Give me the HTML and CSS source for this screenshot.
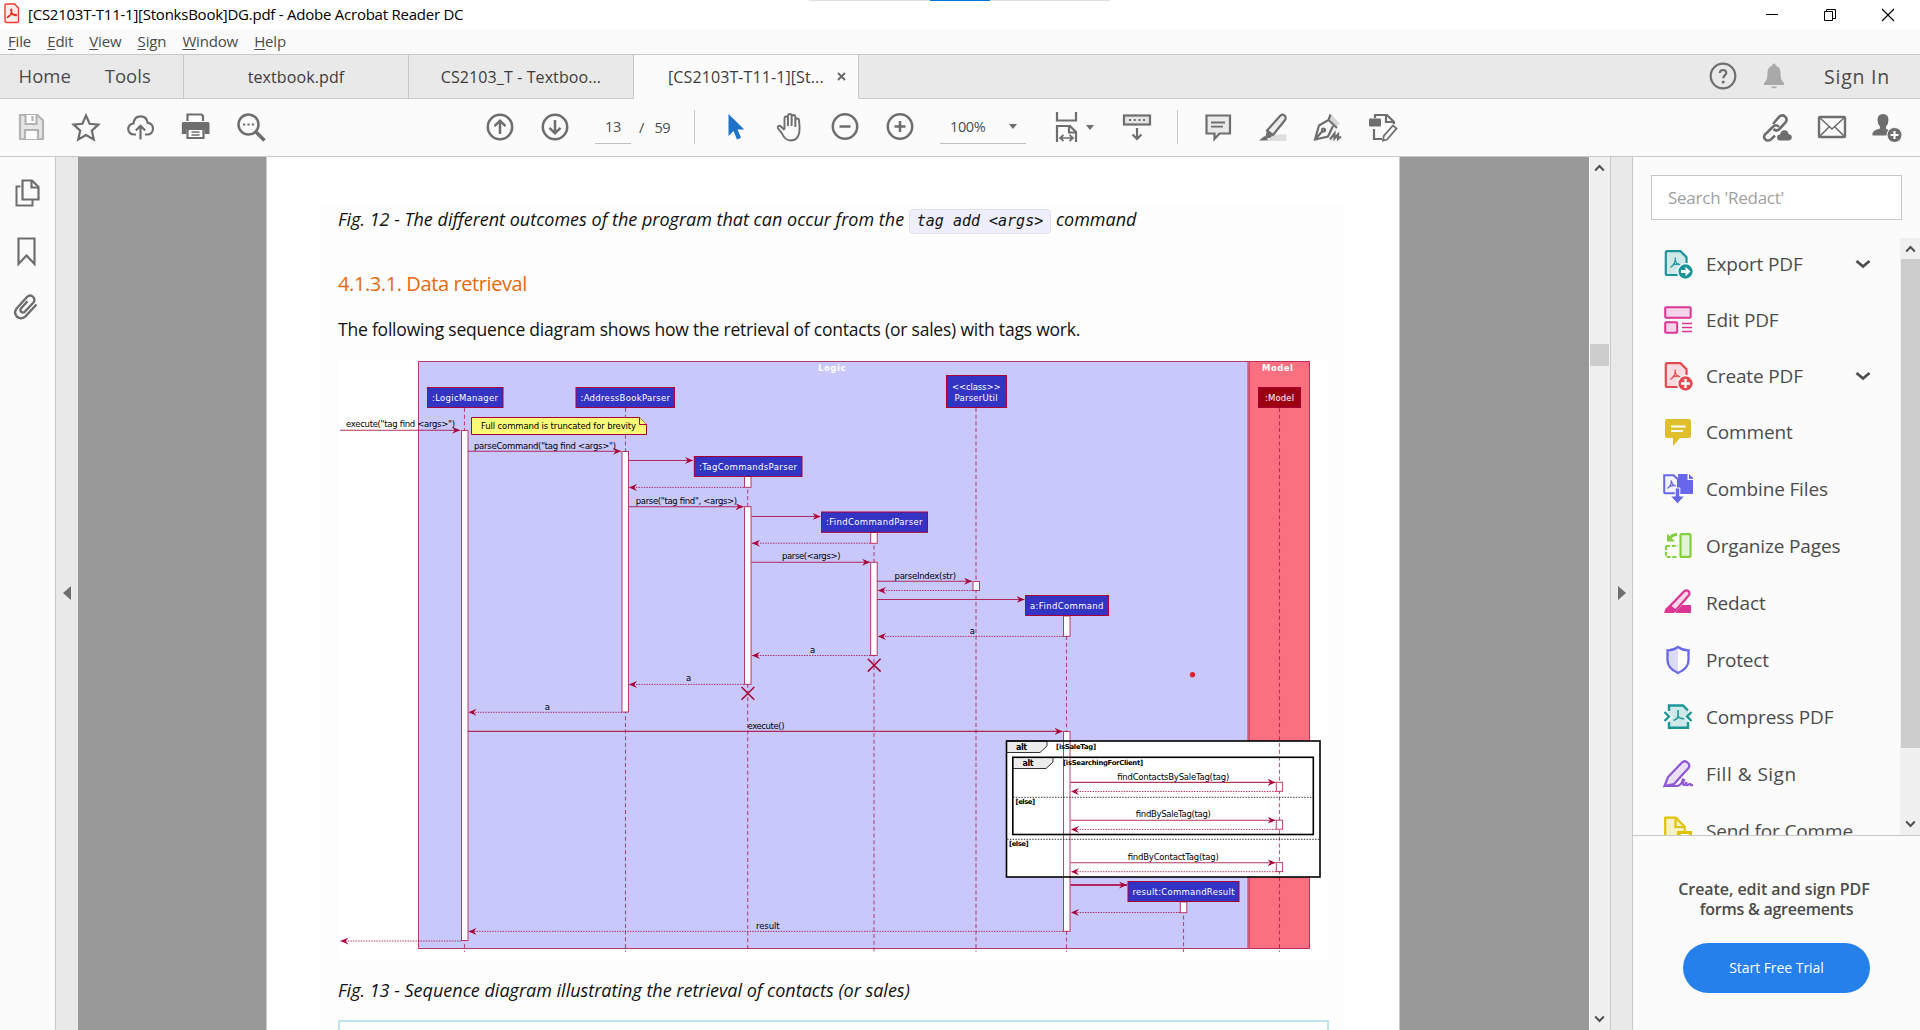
FILE: index.html
```
<!DOCTYPE html>
<html lang="en">
<head>
<meta charset="utf-8">
<title>[CS2103T-T11-1][StonksBook]DG.pdf - Adobe Acrobat Reader DC</title>
<link rel="stylesheet" href="styles.css">
</head>
<body>
<div class="app">
  <header class="titlebar">
    <svg class="app-icon" width="16" height="21" viewBox="0 0 16 21"><path d="M2 1h8.5L14.500 5v13q0 1.500-1.500 1.500H2.500Q1 19.500 1 18V2.500Q1 1 2 1z" fill="#fdeceb" stroke="#ee3b31" stroke-width="1.400"/><path d="M3.500 14.500C6 13.500 8 9.500 7.700 6.500c-.3-1-1.200 0-.5 2 .8 2.300 2.800 4 5 4 .8-.8-.5-1.300-2.500-1.200-2.600.2-5.700 1.200-6.200 3.200z" fill="none" stroke="#e3261c" stroke-width="1.300"/></svg>
    <span class="title">[CS2103T-T11-1][StonksBook]DG.pdf - Adobe Acrobat Reader DC</span>
    <div class="winctl">
      <svg width="14" height="14" viewBox="0 0 14 14"><path d="M1 6.500h12" stroke="#000"/></svg>
      <svg width="14" height="14" viewBox="0 0 14 14"><path d="M1.500 3.500h8v9h-8zM3.500 3.500v-2h9v9h-3" fill="none" stroke="#000"/></svg>
      <svg width="14" height="14" viewBox="0 0 14 14"><path d="M1 1l12 12M13 1L1 13" stroke="#000" stroke-width="1.200"/></svg>
    </div>
    <div class="share-bar"><i></i></div>
  </header>
  <nav class="menubar"><span><u>F</u>ile</span><span><u>E</u>dit</span><span><u>V</u>iew</span><span><u>S</u>ign</span><span><u>W</u>indow</span><span><u>H</u>elp</span></nav>
  <div class="tabs">
    <div class="tab-home"><span>Home</span><span>Tools</span></div>
    <div class="tab"><span>textbook.pdf</span></div>
    <div class="tab"><span>CS2103_T - Textboo...</span></div>
    <div class="tab active"><span>[CS2103T-T11-1][St...</span><svg width="9" height="9" viewBox="0 0 9 9"><path d="M1 1l7 7M8 1L1 8" stroke="#6a6a6a" stroke-width="2"/></svg></div>
    <div class="tab-right">
      <svg width="28" height="28" viewBox="0 0 28 28"><circle cx="14" cy="14" r="12.300" fill="none" stroke="#6e6e6e" stroke-width="2.200"/><path d="M10.800 11q.2-3 3.300-3t3.200 2.800c0 2.200-3 2.600-3 5.400" fill="none" stroke="#6e6e6e" stroke-width="2.200"/><circle cx="14.200" cy="20" r="1.500" fill="#6e6e6e"/></svg>
      <svg width="22" height="26" viewBox="0 0 22 26"><path d="M11 .5q1.800 0 1.800 2.200c3.500 1 4.700 4 4.700 7.300 0 5 1 8 3.500 10v2H1v-2c2.500-2 3.500-5 3.500-10 0-3.300 1.200-6.300 4.700-7.300Q9.200.5 11 .5zM8 23.500h6q-.5 2-3 2t-3-2z" fill="#a9a9a9"/></svg>
      <span class="signin">Sign In</span>
    </div>
  </div>
  <div class="toolbar">
    <svg class="ic dim" viewBox="0 0 30 30"><path d="M4 3h17.500L27 8.500V27H4z" fill="#e6e6e6" stroke="none"/><path d="M4 3h17.500L27 8.500V27H4z"/><path d="M9.500 3v9h11V3M9 27v-9h13v9" fill="#fff"/><path d="M16.500 4v5"/></svg>
    <svg class="ic" viewBox="0 0 30 30"><path d="M15 3.500l3.600 8.300 8.700.8-6.500 6 2 8.900L15 23l-7.800 4.500 2-8.900-6.500-6 8.700-.8z"/></svg>
    <svg class="ic" viewBox="0 0 30 30"><path d="M10 22.500H8a5.500 5.500 0 0 1-.5-11C8 6.500 11 4.300 14.500 4.300c4 0 6.600 2.600 7.200 6.500 3 .2 5.300 2.500 5.300 5.800 0 3.600-2.500 5.900-5.500 5.900H19M14.500 27.500V14.500M9.800 18.500l4.700-4.700 4.700 4.700"/></svg>
    <svg class="ic" viewBox="0 0 30 30"><path d="M6.500 9V2.500h14L22 4v5" fill="#fff"/><path d="M2 10h25q1.500 0 1.500 2v10h-5v-5h-18v5H.8V12Q.8 10 2 10z" fill="#6e6e6e" stroke="none"/><path d="M6.500 17v9h16v-9z" fill="#fff"/><path d="M10.500 20h8M10.500 23h8" stroke-width="1.500"/></svg>
    <svg class="ic" viewBox="0 0 30 30"><circle cx="12.500" cy="12.500" r="10" stroke-width="2.500"/><path d="M20 20l8.500 8.500" stroke-width="3.500"/><path d="M7 12.500h2.200M11.400 12.500h2.200M15.800 12.500H18"/></svg>
    <svg class="ic m-nav" viewBox="0 0 30 30"><circle cx="15" cy="15" r="12.200" stroke-width="2.500"/><path d="M15 22V9M9.500 14.200L15 8.700l5.500 5.500" stroke-width="2.500"/></svg>
    <svg class="ic" viewBox="0 0 30 30"><circle cx="15" cy="15" r="12.200" stroke-width="2.500"/><path d="M15 8v13M9.500 15.800l5.500 5.500 5.500-5.500" stroke-width="2.500"/></svg>
    <div class="field pagenum">13</div>
    <span class="pages"><span>/</span>59</span>
    <span class="sep"></span>
    <svg class="ic" viewBox="0 0 30 30"><path d="M8.500 2v22l5-5 3.500 8.500 4-1.700-3.500-8.300h6.800z" fill="#1e73c8" stroke="none"/></svg>
    <svg class="ic" viewBox="0 0 30 30"><path d="M9.500 17.500V6.500q0-2 1.700-2t1.700 2V14M13 12V4q0-2 1.800-2t1.800 2v10M16.700 12V5q0-2 1.800-2t1.800 2v10M20.400 14V8.500q0-2 1.800-2T24 8.500C24.500 14 27 28.500 15.500 28.500c-5 0-7-3.500-8.500-7L2.800 16c-.5-2 1.700-3 3.200-1.500l3.500 3.500"  stroke-width="1.900"/></svg>
    <svg class="ic" viewBox="0 0 30 30"><circle cx="15" cy="14.500" r="12.200" stroke-width="2.500"/><path d="M9.500 14.500h11" stroke-width="2.500"/></svg>
    <svg class="ic" viewBox="0 0 30 30"><circle cx="15" cy="14.500" r="12.200" stroke-width="2.500"/><path d="M9.500 14.500h11M15 9v11" stroke-width="2.500"/></svg>
    <div class="field zoom">100%<i class="caret"></i></div>
    <svg class="ic" viewBox="0 0 30 30"><path d="M5 0v8.500h19V0M5 30V14h13l6 6v10M17 14v6.500h7"/><path d="M8 26h13M11.500 23L8 26l3.500 3M17.500 23l3.500 3-3.500 3" stroke-width="1.700"/></svg>
    <i class="caret fit"></i>
    <svg class="ic m-scroll" viewBox="0 0 30 30"><rect x="2" y="3.500" width="26" height="9" fill="#e6e6e6"/><path d="M7 8h2M11.700 8h2M16.400 8h2M21 8h2M15 16v11M10.500 22.500L15 27l4.500-4.500"/></svg>
    <span class="sep sep2"></span>
    <svg class="ic" viewBox="0 0 30 30"><path d="M3.500 3.500h23.500v18H16.500l-5 5.500v-5.500h-8z" fill="#e9e9e9"/><path d="M8 10.500h14M8 14.700h12" stroke-width="1.800"/></svg>
    <svg class="ic" viewBox="0 0 30 30"><path d="M14 22.500h14.500v6.500H9z" fill="#dedede" stroke="none"/><path d="M22.500 3.500q2-2 4 0t.5 4.500L15 23l-6-4.500z" fill="#ececec"/><path d="M9 18.500l6 4.500-3 3H7zM6.500 24l3.500 3-1 1.500H1z" fill="#6e6e6e" stroke="none"/></svg>
    <svg class="ic" viewBox="0 0 30 30"><path d="M18 2l9 10-4 2-7-7z" fill="#d6d6d6" stroke="none"/><path d="M17.500 2.500L15.500 8 24 16M15.500 8L6 13.500 2 27.500l13-3L20 14M2 27.500l8-9"/><circle cx="10.500" cy="18" r="1.500"/><path d="M17 27.500l4.500-6v5l3.500-4v4.500l3-2.500"/></svg>
    <svg class="ic" viewBox="0 0 30 30"><path d="M7 6V3h12l7 7v2M18 3v7h8M6 17v10h8"/><rect x="1" y="6.500" width="12" height="8" rx="1" fill="#6e6e6e" stroke="none"/><path d="M25 13.500l3.500 3L19 27.500l-4 1 .8-4.500z" fill="#fff" stroke-width="1.800"/></svg>
    <div class="tool-right">
      <svg class="ic" viewBox="0 0 30 30"><path d="M11 12l6-7q3-3 6-.5t.500 6L17.500 17q-3 3-6 0" stroke-width="2.600"/><path d="M17 15q-3-3.500-6.300 0L3 22.500q-2 3 .3 5t5.700 0l4-4" stroke-width="2.600"/><path d="M18 28.500q-3-.2-3-3t3-3q.8-4.300 4.500-4.300t4 3.800q3.300.5 3.300 3.300t-3 3.200z" fill="#6e6e6e" stroke="none"/></svg>
      <svg class="ic" viewBox="0 0 30 30"><rect x="2" y="5" width="26" height="20" rx="1" stroke-width="2.400"/><path d="M3 6l12 11L27 6M3 24l9-9M27 24l-9-9" stroke-width="1.600"/></svg>
      <svg class="ic" viewBox="0 0 30 30"><path d="M11 2q5.500 0 5.500 6 0 4-2.500 6.500v2.500l4 1.500-2 5H0.500v-2q0-3 7.500-5v-2Q5.500 12 5.500 8q0-6 5.500-6z" fill="#6e6e6e" stroke="none"/><circle cx="22.500" cy="23" r="7.500" fill="#6e6e6e" stroke="#fbfbfb" stroke-width="1"/><path d="M22.500 19v8M18.500 23h8" stroke="#fff"/></svg>
    </div>
  </div>
  <main class="work">
    <aside class="nav-pane">
      <svg class="nav-ic" viewBox="0 0 30 30"><path d="M7.500 8.500H3.500v19h16v-6" stroke-width="2"/><path d="M9.500 2.500h9.500l6.500 6.500v12.500h-16z"/><path d="M18.500 2.500v7h7"/></svg>
      <svg class="nav-ic" viewBox="0 0 30 30"><path d="M5.500 2.500h16V28l-8-8.500-8 8.500z"/></svg>
      <svg class="nav-ic clip" viewBox="0 0 30 30"><path d="M25.500 13.500L14.500 25.300q-4.200 3.700-8.400.5-3.800-4-.5-8.300L16 6q3.300-2.800 6.200 0 2.500 3-.2 6L13.500 21q-2 1.200-3.500-.3-1.300-1.700.2-3.500l6.300-7" stroke-width="2.400"/></svg>
    </aside>
    <div class="strip left"><i class="tri-l"></i></div>
    <section class="viewer">
      <article class="page">
        <div class="sheet">
          <p class="caption fig12">Fig. 12 - The different outcomes of the program that can occur from the <code>tag add &lt;args&gt;</code> command</p>
          <h4>4.1.3.1. Data retrieval</h4>
          <p class="para">The following sequence diagram shows how the retrieval of contacts (or sales) with tags work.</p>
          <svg class="diagram" width="991" height="600" viewBox="338 359 991 600">
            <defs>
              <marker id="ar" markerUnits="userSpaceOnUse" markerWidth="9" markerHeight="8" refX="8" refY="4" orient="auto"><path d="M0 .5L8 4 0 7.500 2.800 4z" fill="#a80036"/></marker>
            </defs>
            <rect x="338" y="359" width="991" height="600" fill="#fff"/>
            <g stroke="#a80036" stroke-opacity=".75">
              <rect x="418.500" y="361.500" width="829.500" height="587" fill="#c8c8fa"/>
              <rect x="1249" y="361.500" width="60.500" height="587" fill="#fb7080"/>
            </g>
            <rect x="1006.500" y="741" width="313.500" height="136" fill="#fff"/>
            <path class="life" d="M464.500 408V952M625.500 408V952M747.700 476V952M874 532V952M976 408V952M1066.500 616V952M1183.500 902V952M1279.500 408V952"/>
            <g class="act">
              <rect x="461.500" y="430.500" width="6.500" height="510"/>
              <rect x="622" y="451.500" width="6.500" height="260.500"/>
              <rect x="744.500" y="476.500" width="6.500" height="10.800"/>
              <rect x="744.500" y="506.700" width="6.500" height="177.600"/>
              <rect x="870.700" y="532.500" width="6.500" height="10.800"/>
              <rect x="870.700" y="562.300" width="6.500" height="93.200"/>
              <rect x="973" y="581.500" width="6.500" height="9"/>
              <rect x="1063.500" y="616" width="6.500" height="20.300"/>
              <rect x="1063.500" y="731.500" width="6.500" height="199.800"/>
              <rect x="1180.300" y="902" width="6.500" height="10.700"/>
              <rect x="1276.300" y="782.300" width="6.300" height="9"/>
              <rect x="1276.300" y="820.200" width="6.300" height="9"/>
              <rect x="1276.300" y="862.600" width="6.300" height="9"/>
            </g>
            <g stroke="#a80036">
              <g fill="#3333c4">
                <rect x="427.500" y="387.500" width="75.500" height="20"/>
                <rect x="576" y="387.500" width="98.500" height="20"/>
                <rect x="946.500" y="375.500" width="60" height="32"/>
                <rect x="694.300" y="456.500" width="107.700" height="20"/>
                <rect x="821.500" y="512" width="106" height="20.300"/>
                <rect x="1025.500" y="595.500" width="83" height="20"/>
                <rect x="1128" y="881.500" width="111" height="20"/>
              </g>
              <rect x="1258.500" y="387.500" width="42" height="20" fill="#9d0012"/>
              <path d="M471.500 417.500h168l7 7v10h-175z" fill="#fbfb77"/><path d="M639.500 417.500v7h7" fill="#fbfb77"/>
            </g>
            <g class="msg">
              <path d="M340 430.300H460"/><path d="M468 451.300H621"/><path d="M629 460.500H693"/><path d="M629 506.700H743.500"/><path d="M751.500 516.500H820.500"/><path d="M751.500 562.300H870"/><path d="M877.500 581.300H972"/><path d="M877.500 599.500H1024.500"/><path d="M468 731.400H1062.500"/><path d="M1070.500 782.400H1275.500"/><path d="M1070.500 820.300H1275.500"/><path d="M1070.500 862.700H1275.500"/><path d="M1070.500 885H1127" class="bold"/>
            </g>
            <g class="msg ret">
              <path d="M744 487.400H629"/><path d="M870.500 543.200H752"/><path d="M973 590.500H878"/><path d="M1063 636.400H878"/><path d="M870.500 655.500H752"/><path d="M744 684.400H629"/><path d="M622 712.300H468.500"/><path d="M1276 791.500H1071"/><path d="M1276 829.400H1071"/><path d="M1276 871.700H1071"/><path d="M1180 912.500H1071"/><path d="M1063 931.400H468.500"/><path d="M461 941H340.500"/>
            </g>
            <path d="M741.500 687l12.800 12.800M754.300 687l-12.800 12.800M867.800 658.800l12.800 12.800M880.600 658.800l-12.800 12.800" stroke="#a80036" stroke-width="1.500"/>
            <circle cx="1192.500" cy="674.700" r="2.600" fill="#e81c24"/>
            <g fill="#ececec" stroke="#000" stroke-width=".8">
              <path d="M1006.500 741h40.500v5l-7 6.500h-33.500z"/><path d="M1012.500 757.500h40.500v4.500l-7 6.500h-33.500z"/>
            </g>
            <g fill="none" stroke="#000" stroke-width="1.600">
              <rect x="1006.500" y="741" width="313.500" height="136"/><rect x="1012.800" y="757.300" width="300.500" height="77.200"/>
            </g>
            <path d="M1013 797.300H1313M1007 839.300H1320" stroke="#222" stroke-dasharray="1.500 1.300" stroke-width=".9"/>
            <g class="dt light">
              <text x="432" y="401" textLength="66">:LogicManager</text>
              <text x="580.500" y="401" textLength="89.500">:AddressBookParser</text>
              <text x="952" y="390.300" textLength="48.500">&lt;&lt;class&gt;&gt;</text>
              <text x="954.500" y="401" textLength="43">ParserUtil</text>
              <text x="1265" y="401" textLength="29">:Model</text>
              <text x="699" y="470" textLength="98">:TagCommandsParser</text>
              <text x="826" y="525.300" textLength="96.500">:FindCommandParser</text>
              <text x="1030" y="609" textLength="73.500">a:FindCommand</text>
              <text x="1132.500" y="895" textLength="102">result:CommandResult</text>
              <text class="b" x="818" y="370.800" textLength="27.500">Logic</text>
              <text class="b" x="1262" y="370.800" textLength="31">Model</text>
            </g>
            <g class="dt">
              <text x="346" y="427.300" textLength="109">execute("tag find &lt;args&gt;")</text>
              <text x="481" y="429.300" textLength="155">Full command is truncated for brevity</text>
              <text x="474" y="448.500" textLength="142">parseCommand("tag find &lt;args&gt;")</text>
              <text x="635.700" y="503.800" textLength="101.500">parse("tag find", &lt;args&gt;)</text>
              <text x="782" y="559.300" textLength="58.500">parse(&lt;args&gt;)</text>
              <text x="894.500" y="578.500" textLength="61.500">parseIndex(str)</text>
              <text x="969.800" y="634">a</text><text x="810" y="653">a</text><text x="686" y="681.300">a</text><text x="544.700" y="709.500">a</text>
              <text x="747.500" y="728.500" textLength="37">execute()</text>
              <text x="1117" y="779.600" textLength="112">findContactsBySaleTag(tag)</text>
              <text x="1135.500" y="817.300" textLength="75">findBySaleTag(tag)</text>
              <text x="1127.500" y="859.700" textLength="91">findByContactTag(tag)</text>
              <text x="756" y="928.700" textLength="23.500">result</text>
              <text class="b alt" x="1016" y="749.700" textLength="11">alt</text>
              <text class="b alt" x="1022.500" y="765.800" textLength="11">alt</text>
              <g class="s"><text x="1056" y="749" textLength="40">[isSaleTag]</text>
              <text x="1063" y="765" textLength="80">[isSearchingForClient]</text>
              <text x="1015.500" y="803.700" textLength="19.500">[else]</text>
              <text x="1009" y="846.300" textLength="19.500">[else]</text></g>
            </g>
          </svg>
          <p class="caption fig13">Fig. 13 - Sequence diagram illustrating the retrieval of contacts (or sales)</p>
          <div class="callout"></div>
        </div>
      </article>
    </section>
    <div class="vscroll">
      <svg width="11" height="8" viewBox="0 0 11 8"><path d="M1.200 6.500L5.500 2l4.300 4.500" fill="none" stroke="#505050" stroke-width="2"/></svg>
      <i class="thumb"></i>
      <svg class="down" width="11" height="8" viewBox="0 0 11 8"><path d="M1.200 1.500L5.500 6l4.300-4.500" fill="none" stroke="#505050" stroke-width="2"/></svg>
    </div>
    <div class="strip right"><i class="tri-r"></i></div>
    <aside class="tools">
      <div class="search">Search 'Redact'</div>
      <div class="tool-area">
        <div class="tool-list">
          <div class="tool short"><svg viewBox="0 0 30 30"><path d="M4 2.200h13.500l6 6V26H4q-1.200 0-1.200-1.200V3.400q0-1.200 1.200-1.200z" fill="#cfe8e8" stroke="#1b959a" stroke-width="2.200"/><path d="M7.500 18.500C11 16.500 12.700 12 12.300 8.500M12.300 11c.5 3 3 5.500 6 5.500M9 16.500c3-1.500 6-1.800 8-1" fill="none" stroke="#1b959a" stroke-width="1.300"/><circle cx="22.500" cy="22.500" r="7.900" fill="#1b959a" stroke="#fbfbfb" stroke-width="1.500"/><path d="M18 21h4.500v-3.300l5 4.800-5 4.800V24H18z" fill="#fff"/></svg><span>Export PDF</span><svg class="chev" viewBox="0 0 16 10"><path d="M1.500 2L8 7.500 14.500 2" fill="none" stroke="#4b4b4b" stroke-width="2.800"/></svg></div>
          <div class="tool short"><svg viewBox="0 0 30 30"><g fill="#f5d3e9" stroke="#dc3494" stroke-width="2"><rect x="2.200" y="2.200" width="25.500" height="10.600" rx="1"/><rect x="2.200" y="17.300" width="12" height="10.500" rx="1"/></g><path d="M19 18.500h10M19 22.500h10M19 26.500h10" stroke="#dc3494" stroke-width="1.300"/></svg><span>Edit PDF</span></div>
          <div class="tool short"><svg viewBox="0 0 30 30"><path d="M4 2.200h13.500l6 6V26H4q-1.200 0-1.200-1.200V3.400q0-1.200 1.200-1.200z" fill="#f9dcdf" stroke="#e5484f" stroke-width="2.200"/><path d="M7.500 18.500C11 16.500 12.700 12 12.300 8.500M12.300 11c.5 3 3 5.500 6 5.500M9 16.500c3-1.500 6-1.800 8-1" fill="none" stroke="#e5484f" stroke-width="1.300"/><circle cx="22.500" cy="22.500" r="7.900" fill="#e5484f" stroke="#fbfbfb" stroke-width="1.500"/><path d="M22.500 18v9M18 22.500h9" stroke="#fff" stroke-width="2.400"/></svg><span>Create PDF</span><svg class="chev" viewBox="0 0 16 10"><path d="M1.500 2L8 7.500 14.500 2" fill="none" stroke="#4b4b4b" stroke-width="2.800"/></svg></div>
          <div class="tool short"><svg viewBox="0 0 30 30"><path d="M4 2h22q2 0 2 2v15q0 2-2 2h-9l-7 8v-8H4q-2 0-2-2V4q0-2 2-2z" fill="#dfc02c"/><path d="M8 9.500h14.500M8 14h12" stroke="#fff" stroke-width="2"/></svg><span>Comment</span></div>
          <div class="tool"><svg viewBox="0 0 30 30"><path d="M15 0h9.500v6H31v14H16z" fill="#6767ec"/><path d="M26 0l5 5h-5z" fill="#6767ec"/><path d="M1.200 1.200h9.300l4.500 4v14H2.200q-1 0-1-1z" fill="#f4f4ff" stroke="#6767ec" stroke-width="2"/><path d="M4.500 14.500C7 12.500 8.500 9 8.200 6.500 9 10 10.500 12 13 12M6 12.800q3-1.500 6-1.200" fill="none" stroke="#6767ec" stroke-width="1.200"/><path d="M12.200 14h4.600v8h4.700L14.500 30 7.500 22h4.700z" fill="#6767ec" stroke="#fbfbfb"/></svg><span>Combine Files</span></div>
          <div class="tool"><svg viewBox="0 0 30 30"><rect x="17.500" y="3.200" width="10" height="22.700" rx="1" fill="#e2f3d6" stroke="#84cf3e" stroke-width="2.200"/><path d="M3 15v11h12M3 15h12" fill="none" stroke="#84cf3e" stroke-width="2.200" stroke-dasharray="4 1.800"/><path d="M14 3.500q-4.500 0-6.500 3" fill="none" stroke="#84cf3e" stroke-width="3"/><path d="M4 2.500v8h8z" fill="#84cf3e"/></svg><span>Organize Pages</span></div>
          <div class="tool"><svg viewBox="0 0 30 30"><path d="M19 17.500h8.500v7H13z" fill="#dc3494" stroke="#dc3494"/><path d="M21.500 3q3-1.500 4.700.8 1 2-.7 4L12.500 22.500 7 18z" fill="#f7d6e9" stroke="#dc3494" stroke-width="2.200"/><path d="M6 17.500l6.500 5.500-1.500 2H1.200l1-4z" fill="#dc3494"/></svg><span>Redact</span></div>
          <div class="tool"><svg viewBox="0 0 30 30"><path d="M15 2q5 3.500 10.500 3.300v10Q25.500 23.500 15 28 4.500 23.500 4.500 15.300v-10Q10 5.500 15 2z" fill="#fff"/><path d="M15 2v26Q4.500 23.500 4.500 15.300v-10Q10 5.500 15 2z" fill="#dcdcf8"/><path d="M15 2q5 3.500 10.500 3.300v10Q25.500 23.500 15 28 4.500 23.500 4.500 15.300v-10Q10 5.500 15 2z" fill="none" stroke="#6767ec" stroke-width="2.300"/></svg><span>Protect</span></div>
          <div class="tool"><svg viewBox="0 0 30 30"><path d="M6 4h14l5 5v3l-4 3 4 4v6H6v-6l4-4-4-4z" fill="#cfe8e8"/><path d="M6 9V3.500h14l5 5M25 20v5.700H6V20M1.500 10l4.500 4.500L1.500 19M28.500 10L24 14.500l4.500 4.500" fill="none" stroke="#1b959a" stroke-width="2.400"/><path d="M15 8v6.500q0 2-4.500 4M15 14.500q3 3 6 2" fill="none" stroke="#1b959a" stroke-width="1.600"/></svg><span>Compress PDF</span></div>
          <div class="tool"><svg viewBox="0 0 30 30"><path d="M19 3.500q2.500-2.500 5.500 0t1 5.500L11 25l-9.500 2L5 18z" fill="#ece0f7" stroke="#8f56d6" stroke-width="2.200"/><path d="M1.500 27h12.500q4 0 6-6.500l1 .5q-2 5 0 5t2.500-3q-.5 4 1.500 3t2-2q0 2.500 3 2" fill="none" stroke="#8f56d6" stroke-width="2.200"/></svg><span class="wide">Fill &amp; Sign</span></div>
          <div class="tool"><svg viewBox="0 0 30 30"><path d="M2.200 1.700h10.500l9 9V28H2.200z" fill="#f8f1c6" stroke="#dfc300" stroke-width="2.200"/><path d="M12.500 2v9h9" fill="none" stroke="#dfc300" stroke-width="2.200"/><path d="M14 15h15v10H14z" fill="#dfc300"/><path d="M18 18.500h8" stroke="#fff"/></svg><span>Send for Comme</span></div>
        </div>
        <div class="list-scroll">
          <svg width="11" height="8" viewBox="0 0 11 8"><path d="M1.200 6.500L5.500 2l4.300 4.500" fill="none" stroke="#505050" stroke-width="2"/></svg>
          <i class="thumb2"></i>
          <svg class="down2" width="11" height="8" viewBox="0 0 11 8"><path d="M1.200 1.500L5.500 6l4.300-4.500" fill="none" stroke="#505050" stroke-width="2"/></svg>
        </div>
      </div>
      <div class="promo">
        <p class="lead">Create, edit and sign PDF</p>
        <p>forms &amp; agreements</p>
        <button>Start Free Trial</button>
      </div>
    </aside>
  </main>
</div>
</body>
</html>
```

FILE: styles.css
```
* { box-sizing: border-box; }
body { margin: 0; font-family: "Open Sans", "Noto Sans", sans-serif; font-size: 15px; color: #4b4b4b; }
svg { display: block; flex: none; }
p, h4 { margin: 0; }
.app { width: 1920px; height: 1030px; display: flex; flex-direction: column; overflow: hidden; background: #fbfbfb; }

.titlebar { position: relative; height: 29px; flex: none; display: flex; align-items: center; background: #fff; color: #000; padding-left: 4px; }
.app-icon { margin-top: -3px; }
.title { margin-left: 8px; padding-bottom: 2px; letter-spacing: -.24px; white-space: nowrap; }
.winctl { margin-left: auto; display: flex; gap: 44px; padding-right: 25px; }
.share-bar { position: absolute; left: 809px; top: 0; width: 301px; height: 1px; background: #e0e0e0; display: flex; justify-content: center; }
.share-bar i { width: 60px; height: 1px; background: #0078d7; }

.menubar { height: 26px; flex: none; display: flex; align-items: center; gap: 16.2px; padding: 0 0 2px 8px; letter-spacing: -.18px; background: #fafafa; border-bottom: 1px solid #c8c8c8; }
.menubar u { text-underline-offset: 2px; }

.tabs { height: 44px; flex: none; display: flex; background: #e9e9e9; }
.tabs > div { border-bottom: 1px solid #c8c8c8; display: flex; align-items: center; }
.tab-home { width: 183px; font-size: 18.5px; padding: 0 0 2px 18.5px; gap: 34px; }
.tab { width: 225px; border-left: 1px solid #c8c8c8; justify-content: center; font-size: 16px; letter-spacing: .1px; color: #3c3c3c; }
.tabs > .active { width: 226px; background: #fbfbfb; border-bottom-color: #fbfbfb; border-right: 1px solid #c8c8c8; justify-content: flex-start; padding-left: 34px; gap: 13px; }
.tab-right { flex: 1; justify-content: flex-end; padding-right: 30px; }
.tab-right svg { margin-bottom: 2px; }
.tab-right svg + svg { margin-left: 26px; }
.signin { margin-left: 39px; font-size: 19.5px; font-weight: 500; letter-spacing: .75px; }

.toolbar { height: 58px; flex: none; display: flex; align-items: center; padding: 0 0 1px 16px; border-bottom: 1px solid #c8c8c8; font-size: 14.5px; }
.ic { width: 30px; height: 30px; fill: none; stroke: #6e6e6e; stroke-width: 2.2; }
.dim { stroke: #b3b3b3; }
.ic + .ic { margin-left: 25px; }
.ic.m-nav { margin-left: 219px; }
.field { height: 34px; border-bottom: 1px solid #c0c0c0; display: flex; align-items: center; letter-spacing: -.4px; }
.pagenum { width: 36px; margin-left: 25px; justify-content: center; }
.pages { margin-left: 8px; width: 31px; display: flex; justify-content: space-between; letter-spacing: -.5px; }
.sep { width: 1px; height: 34px; background: #c8c8c8; margin: 0 25px 0 24px; }
.zoom { width: 86px; margin: 0 26px 0 25px; padding: 0 9px 0 10px; justify-content: space-between; }
.caret { border: 4px solid transparent; border-top: 5px solid #6e6e6e; border-bottom: 0; }
.fit { margin-left: 4px; }
.ic.m-scroll { margin-left: 28px; }
.sep2 { margin-left: 25px; }
.tool-right { margin-left: auto; display: flex; padding-right: 18px; }

.work { flex: 1; min-height: 0; display: flex; }
.nav-pane { width: 56px; border-right: 1px solid #c8c8c8; padding: 21px 0 0 13px; display: flex; flex-direction: column; gap: 28px; }
.nav-ic { width: 30px; height: 30px; fill: none; stroke: #6e6e6e; stroke-width: 2.200; }
.clip { margin: -3px 0 0 -2px; }
.strip { width: 22px; background: #e9e9e9; display: flex; align-items: center; justify-content: center; padding-bottom: 2px; }
.tri-l, .tri-r { border: 7px solid transparent; border-left-width: 0; border-right: 8px solid #6e6e6e; }
.tri-r { border-right-width: 0; border-left: 8px solid #6e6e6e; }
.strip.right { width: 23px; border: solid #c8c8c8; border-width: 0 1px; }
.viewer { width: 1511px; background: #999; padding-left: 188px; overflow: hidden; }
.page { width: 1134px; height: 873px; background: #fff; border: solid #c8c8c8; border-width: 0 1px; padding: 47px 0 0 54px; }
.sheet { width: 1024px; height: 826px; padding-left: 17px; background: #fdfdfd; color: #111; overflow: hidden; }
.caption { height: 30px; line-height: 31px; font-size: 18px; font-style: italic; white-space: nowrap; }
.caption code { display: inline-block; height: 25px; padding: 0 7px; border: 1px solid #e2e2ea; border-radius: 4px; background: #eeeefc; font: italic 15px/23px "DejaVu Sans Mono", monospace; vertical-align: 0; }
h4 { margin-top: 35px; height: 30px; font: 400 20px/30px "Open Sans", sans-serif; letter-spacing: -.4px; color: #e8690b; }
.para { margin-top: 14px; height: 30px; line-height: 32px; font-size: 17.5px; letter-spacing: -.21px; white-space: nowrap; }
.diagram { margin-top: 16px; }
.fig13 { margin-top: 16px; }
.callout { width: 991px; height: 60px; margin-top: 15px; border: 2px solid #bde6ea; }

.life { fill: none; stroke: #a80036; stroke-opacity: .65; stroke-width: 1.1; stroke-dasharray: 4 2.700; }
.act { fill: #fff; stroke: #a80036; stroke-opacity: .75; }
.msg { stroke: #a80036; stroke-opacity: .8; stroke-width: 1.100; fill: none; }
.msg path { marker-end: url(#ar); }
.msg .bold { stroke-width: 2; }
.ret { stroke-dasharray: 1.400 1.200; stroke-width: 1; }
.dt { font-family: "DejaVu Sans", sans-serif; font-size: 8.500px; fill: #000; }
.light { fill: #fff; }
.dt .b { font-weight: bold; }
.dt .alt { font-size: 8px; }
.dt .s { font-size: 6.800px; font-weight: bold; }

.vscroll { width: 21px; background: #f0f0f0; border-left: 1px solid #fff; display: flex; flex-direction: column; align-items: center; padding: 7px 1px 0 0; }
.thumb { width: 19px; height: 22px; margin-top: 172px; background: #cdcdcd; }
.down { margin: auto 0 7px; }

.tools { flex: 1; display: flex; flex-direction: column; min-width: 0; }
.search { flex: none; margin: 18px 0 0 18px; width: 251px; height: 45px; border: 1px solid #c8c8c8; background: #fff; padding-left: 16px; line-height: 44px; font-size: 17px; letter-spacing: -.25px; color: #a0a0a0; }
.tool-area { height: 615px; flex: none; display: flex; overflow: hidden; }
.tool-list { width: 267px; padding: 16px 0 0 30px; overflow: hidden; }
.tool { height: 57px; display: flex; align-items: center; gap: 13px; font-size: 19px; letter-spacing: -.15px; white-space: nowrap; }
.wide { letter-spacing: .5px; }
.short { height: 56px; }
.tool svg { width: 30px; height: 30px; }
.tool .chev { width: 16px; height: 10px; margin: 0 29px 0 auto; }
.list-scroll { width: 20px; margin-top: 18px; background: #f0f0f0; display: flex; flex-direction: column; align-items: center; padding-top: 7px; }
.thumb2 { width: 19px; height: 489px; margin-top: 6px; background: #cdcdcd; }
.down2 { margin: auto 0 7px; }
.promo { flex: 1; border-top: 1px solid #c8c8c8; padding-top: 43px; display: flex; flex-direction: column; align-items: center; }
.promo p { font-size: 16px; font-weight: 600; line-height: 20px; letter-spacing: -.25px; }
.promo .lead { letter-spacing: -.05px; padding-right: 5px; }
.promo button { margin-top: 24px; width: 187px; height: 50px; border: 0; border-radius: 25px; padding-bottom: 3px; background: #2680eb; color: #fff; font: 14px "Open Sans", sans-serif; letter-spacing: -.05px; }
```
